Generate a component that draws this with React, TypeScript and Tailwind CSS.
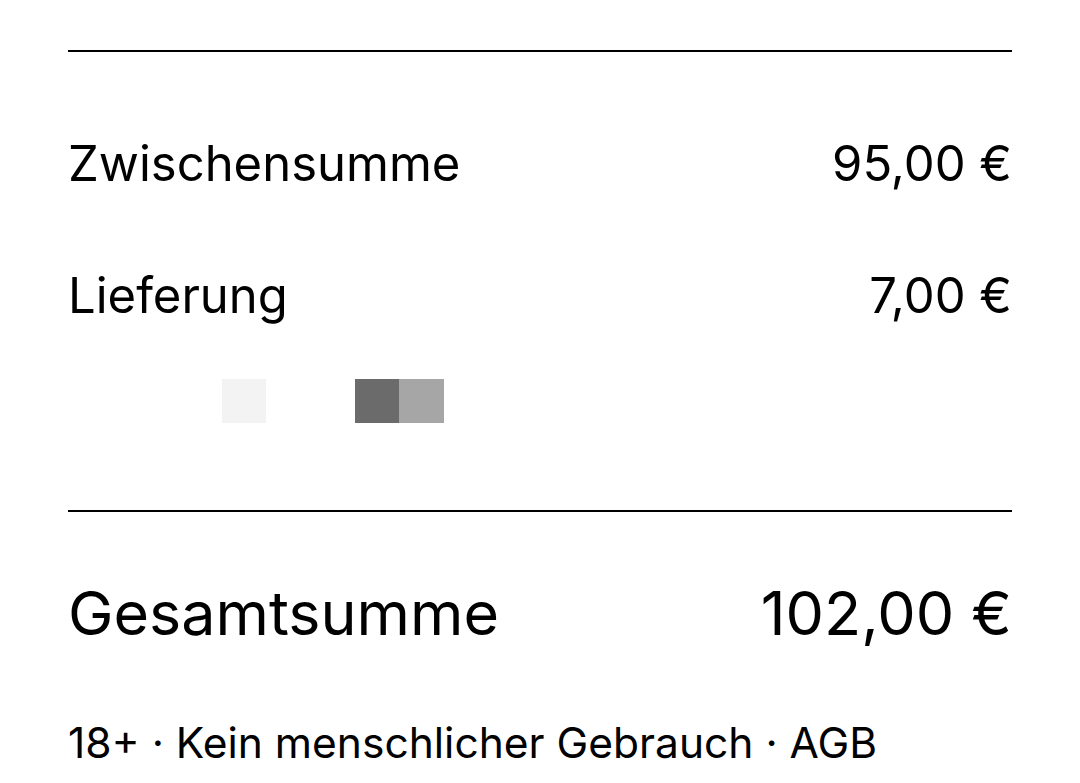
export default function App() {
  return (
    <div className="min-h-screen bg-white text-black px-[68px] pt-[50px]" style={{ fontFamily: 'Inter, "Noto Sans", sans-serif' }}>
      <div className="border-t-2 border-black" />

      {/* Summary rows */}
      <div className="flex justify-between items-center mt-[87px] text-[49px] leading-none">
        <span>Zwischensumme</span>
        <span>95,00 €</span>
      </div>
      <div className="flex justify-between items-center mt-[83px] text-[49px] leading-none">
        <span>Lieferung</span>
        <span>7,00 €</span>
      </div>

      {/* Loading placeholders */}
      <div className="flex mt-[59px] h-[44px] pl-[154px]">
        <div className="w-[44px] h-[44px] bg-[#f3f3f3]" />
        <div className="w-[89px]" />
        <div className="w-[44px] h-[44px] bg-[#6b6b6b]" />
        <div className="w-[45px] h-[44px] bg-[#a6a6a6]" />
      </div>

      <div className="border-t-2 border-black mt-[87px]" />

      <div className="flex justify-between items-center mt-[71px] text-[61px] leading-none">
        <span>Gesamtsumme</span>
        <span>102,00 €</span>
      </div>

      <p className="mt-[78px] text-[42.5px] leading-none whitespace-nowrap">18+ · Kein menschlicher Gebrauch · AGB</p>
    </div>
  );
}
